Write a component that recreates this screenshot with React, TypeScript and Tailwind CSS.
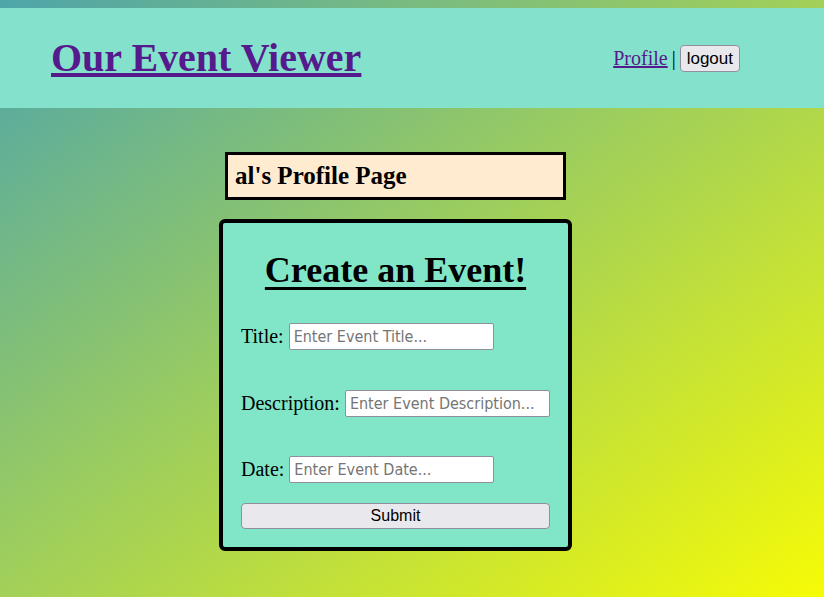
export default function App() {
  return (
    <div className="min-h-[597px] bg-[linear-gradient(to_bottom_right,#4ea5aa,#f6fb06)] pt-2 font-['Liberation_Serif',serif]">
      <header className="flex h-[100px] items-center justify-between bg-[#84e2cc] pl-[51px] pr-[84px]">
        <a href="#" className="text-[40px] font-bold leading-none text-[#551a8b] underline">
          Our Event Viewer
        </a>
        <div className="flex items-center gap-1 text-[20px]">
          <a href="#" className="text-[#551a8b] underline">Profile</a>
          <span>|</span>
          <button className="rounded-[4px] border border-[#8f8f9d] bg-[#e9e9ed] px-[6px] py-[2px] font-['Liberation_Sans',sans-serif] text-[17px] leading-[21px] text-black">
            logout
          </button>
        </div>
      </header>

      <main className="flex flex-col items-center pr-[33px] pt-[44px]">
        <div className="w-[341px] border-[3px] border-black bg-[#ffebd0] px-[7px] py-[6px]">
          <h2 className="text-[25px] font-bold leading-[30px] text-black">al's Profile Page</h2>
        </div>

        <form className="mt-[19px] w-[353px] rounded-[6px] border-4 border-black bg-[#80e6c7] px-[18px] pb-[18px] pt-[26px]">
          <h1 className="text-center text-[36px] font-bold leading-[42px] text-black underline decoration-[3px] underline-offset-[5px]">
            Create an Event!
          </h1>
          <div className="mt-[32px] flex items-center gap-[5px] text-[20px] leading-[27px] text-black">
            <label>Title:</label>
            <input
              placeholder="Enter Event Title..."
              className="h-[27px] w-[205px] rounded-[2px] border border-[#8f8f9d] bg-white px-[4px] font-['DejaVu_Sans_Condensed','DejaVu_Sans',sans-serif] text-[16px] placeholder:text-[#757575]"
            />
          </div>
          <div className="mt-[40px] flex items-center gap-[5px] text-[20px] leading-[27px] text-black">
            <label>Description:</label>
            <input
              placeholder="Enter Event Description..."
              className="h-[27px] w-[205px] rounded-[2px] border border-[#8f8f9d] bg-white px-[4px] font-['DejaVu_Sans_Condensed','DejaVu_Sans',sans-serif] text-[16px] placeholder:text-[#757575]"
            />
          </div>
          <div className="mt-[39px] flex items-center gap-[5px] text-[20px] leading-[27px] text-black">
            <label>Date:</label>
            <input
              placeholder="Enter Event Date..."
              className="h-[27px] w-[205px] rounded-[2px] border border-[#8f8f9d] bg-white px-[4px] font-['DejaVu_Sans_Condensed','DejaVu_Sans',sans-serif] text-[16px] placeholder:text-[#757575]"
            />
          </div>
          <button
            type="button"
            className="mt-[20px] h-[26px] w-full rounded-[4px] border border-[#8f8f9d] bg-[#e9e9ed] font-['Liberation_Sans',sans-serif] text-[16px] text-black"
          >
            Submit
          </button>
        </form>
      </main>
    </div>
  );
}
